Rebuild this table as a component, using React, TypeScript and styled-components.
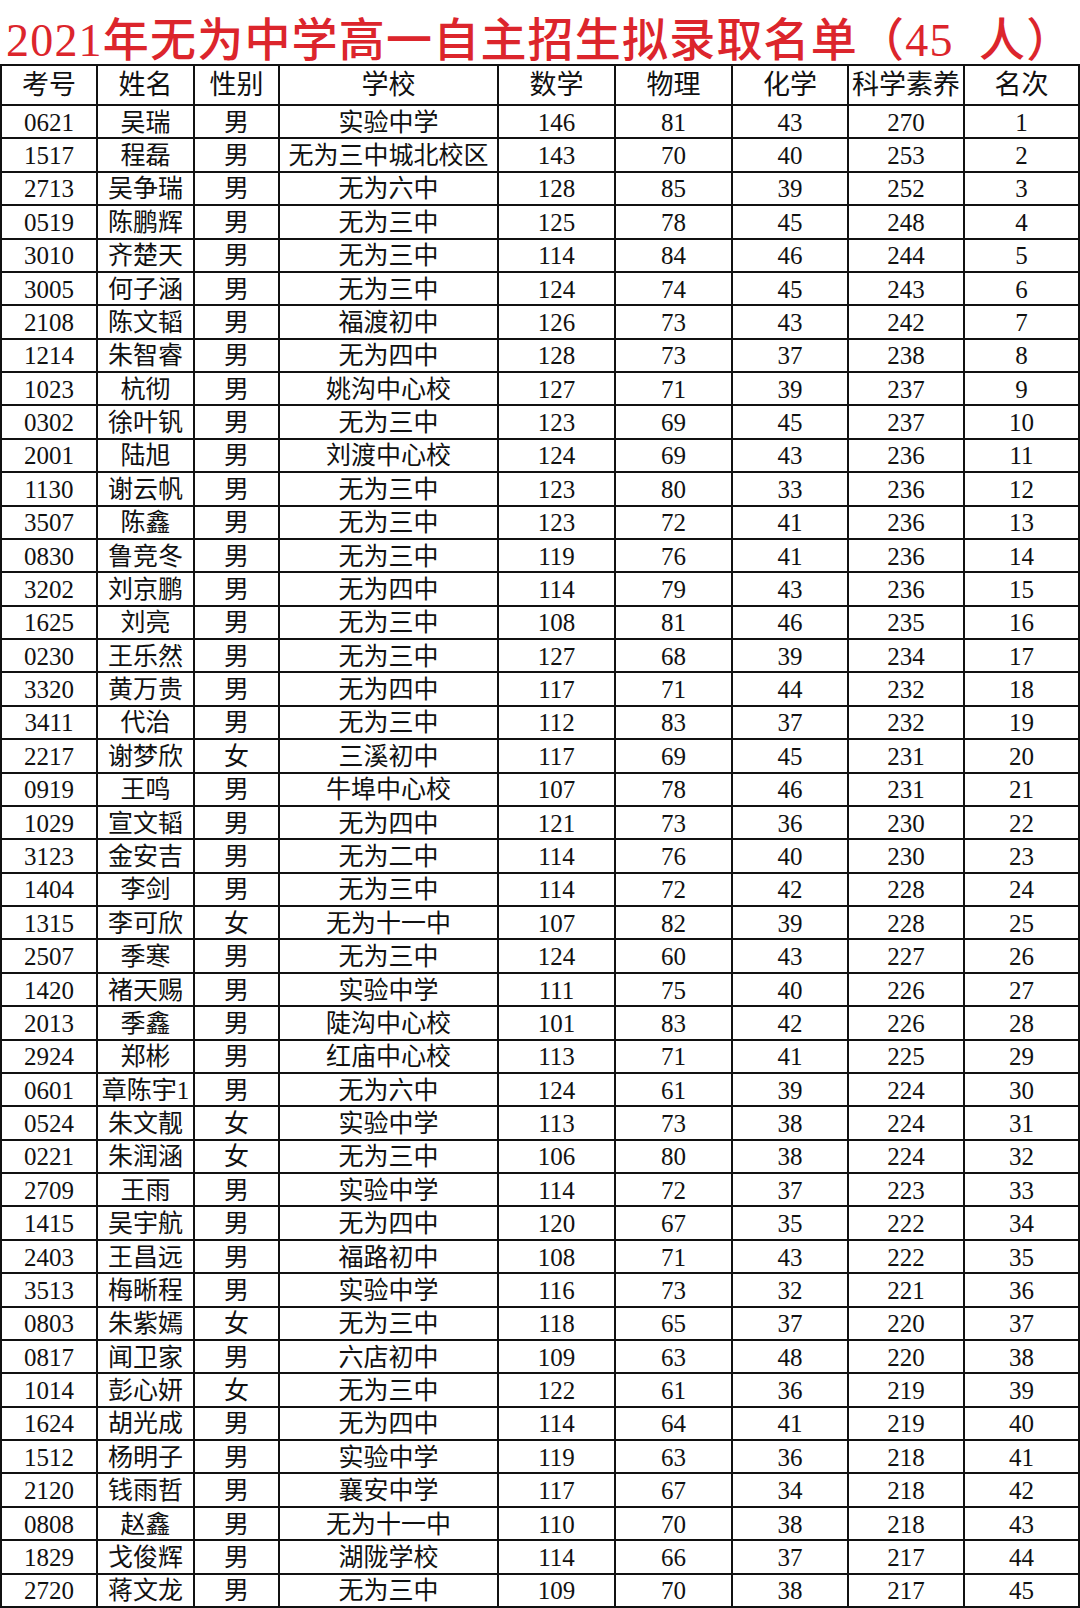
import React from "react";
import styled, { createGlobalStyle } from "styled-components";

const GlobalStyle = createGlobalStyle`
  html, body {
    margin: 0;
    padding: 0;
    background: #ffffff;
  }
  * {
    box-sizing: border-box;
  }
`;

const FONT = `"Liberation Serif", "Noto Sans CJK SC", serif`;

const Page = styled.div`
  width: 1080px;
  height: 1608px;
  background: #ffffff;
  display: flex;
  flex-direction: column;
  overflow: hidden;
  font-family: ${FONT};
  color: #111111;
`;

const Title = styled.h1`
  margin: 0;
  height: 64px;
  display: flex;
  align-items: center;
  padding: 7px 0 0 6px;
  font-size: 46px;
  font-weight: 500;
  letter-spacing: 1.2px;
  color: #dc252c;
  white-space: pre;
`;

const Table = styled.div`
  flex: 1;
  display: grid;
  grid-template-columns: 96px 97px 85px 219px 117px 117px 116px 116px 115px;
  grid-template-rows: 40px repeat(45, 1fr);
  border-top: 2px solid #111;
  border-left: 2px solid #111;
`;

const Cell = styled.div<{ $head?: boolean }>`
  display: flex;
  align-items: center;
  justify-content: center;
  border-right: 2px solid #111;
  border-bottom: 2px solid #111;
  font-size: ${(p) => (p.$head ? "27px" : "25px")};
  line-height: 1;
  white-space: nowrap;
  overflow: visible;
  padding-top: 1px;
`;

const headers = ["考号", "姓名", "性别", "学校", "数学", "物理", "化学", "科学素养", "名次"];

const raw = `0621 吴瑞 男 实验中学 146 81 43 270 1
1517 程磊 男 无为三中城北校区 143 70 40 253 2
2713 吴争瑞 男 无为六中 128 85 39 252 3
0519 陈鹏辉 男 无为三中 125 78 45 248 4
3010 齐楚天 男 无为三中 114 84 46 244 5
3005 何子涵 男 无为三中 124 74 45 243 6
2108 陈文韬 男 福渡初中 126 73 43 242 7
1214 朱智睿 男 无为四中 128 73 37 238 8
1023 杭彻 男 姚沟中心校 127 71 39 237 9
0302 徐叶钒 男 无为三中 123 69 45 237 10
2001 陆旭 男 刘渡中心校 124 69 43 236 11
1130 谢云帆 男 无为三中 123 80 33 236 12
3507 陈鑫 男 无为三中 123 72 41 236 13
0830 鲁竞冬 男 无为三中 119 76 41 236 14
3202 刘京鹏 男 无为四中 114 79 43 236 15
1625 刘亮 男 无为三中 108 81 46 235 16
0230 王乐然 男 无为三中 127 68 39 234 17
3320 黄万贵 男 无为四中 117 71 44 232 18
3411 代治 男 无为三中 112 83 37 232 19
2217 谢梦欣 女 三溪初中 117 69 45 231 20
0919 王鸣 男 牛埠中心校 107 78 46 231 21
1029 宣文韬 男 无为四中 121 73 36 230 22
3123 金安吉 男 无为二中 114 76 40 230 23
1404 李剑 男 无为三中 114 72 42 228 24
1315 李可欣 女 无为十一中 107 82 39 228 25
2507 季寒 男 无为三中 124 60 43 227 26
1420 褚天赐 男 实验中学 111 75 40 226 27
2013 季鑫 男 陡沟中心校 101 83 42 226 28
2924 郑彬 男 红庙中心校 113 71 41 225 29
0601 章陈宇1 男 无为六中 124 61 39 224 30
0524 朱文靓 女 实验中学 113 73 38 224 31
0221 朱润涵 女 无为三中 106 80 38 224 32
2709 王雨 男 实验中学 114 72 37 223 33
1415 吴宇航 男 无为四中 120 67 35 222 34
2403 王昌远 男 福路初中 108 71 43 222 35
3513 梅晰程 男 实验中学 116 73 32 221 36
0803 朱紫嫣 女 无为三中 118 65 37 220 37
0817 闻卫家 男 六店初中 109 63 48 220 38
1014 彭心妍 女 无为三中 122 61 36 219 39
1624 胡光成 男 无为四中 114 64 41 219 40
1512 杨明子 男 实验中学 119 63 36 218 41
2120 钱雨哲 男 襄安中学 117 67 34 218 42
0808 赵鑫 男 无为十一中 110 70 38 218 43
1829 戈俊辉 男 湖陇学校 114 66 37 217 44
2720 蒋文龙 男 无为三中 109 70 38 217 45`;

const rows = raw.split("\n").map((line) => line.trim().split(" "));

const App: React.FC = () => {
  return (
    <>
      <GlobalStyle />
      <Page>
        <Title>{"2021年无为中学高一自主招生拟录取名单（45  人）"}</Title>
        <Table>
          {headers.map((h) => (
            <Cell $head key={h}>
              {h}
            </Cell>
          ))}
          {rows.map((row) =>
            row.map((value, i) => <Cell key={row[0] + "-" + i}>{value}</Cell>)
          )}
        </Table>
      </Page>
    </>
  );
};

export default App;
